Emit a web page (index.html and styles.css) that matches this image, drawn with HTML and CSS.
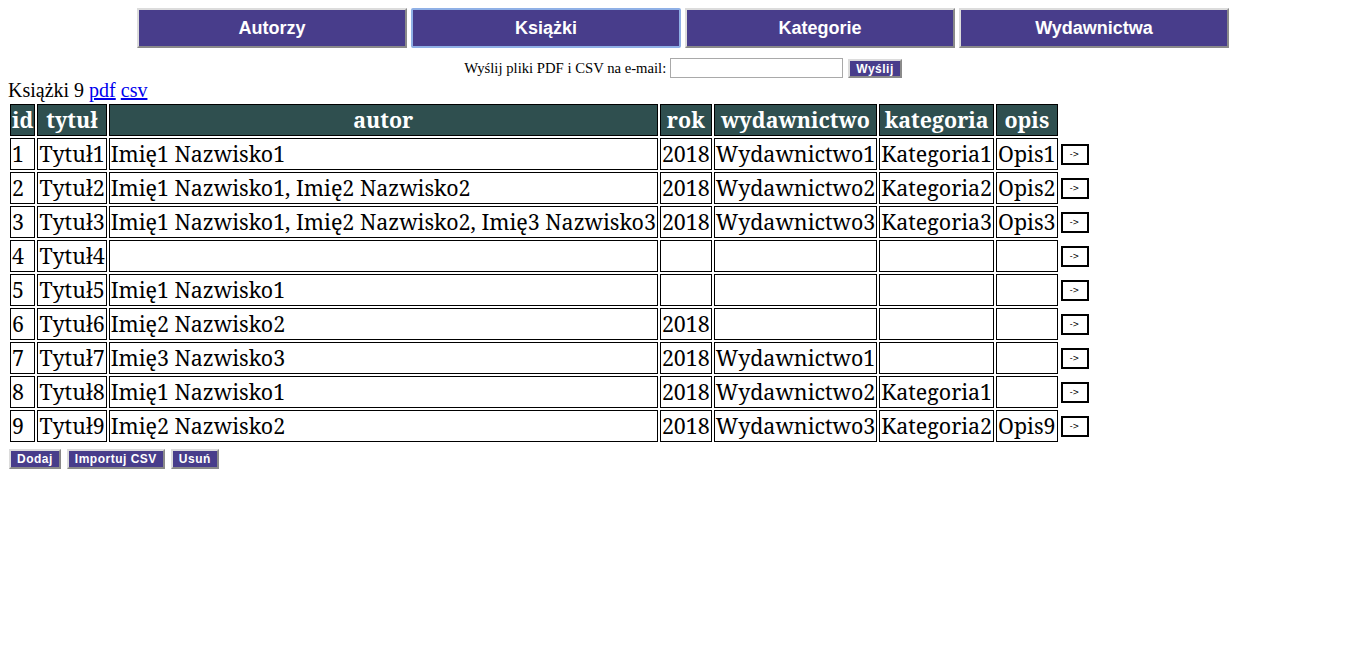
FILE: index.html
```html
<!DOCTYPE html>
<html lang="pl">
<head>
<meta charset="utf-8">
<title>Książki</title>
<link rel="stylesheet" href="styles.css">
</head>
<body>
<nav class="nav">
  <button class="nav-btn">Autorzy</button>
  <button class="nav-btn active">Książki</button>
  <button class="nav-btn">Kategorie</button>
  <button class="nav-btn">Wydawnictwa</button>
</nav>
<form class="mail">
  <span>Wyślij pliki PDF i CSV na e-mail:</span>
  <input class="mail-input" type="text">
  <button class="small-btn send" type="button">Wyślij</button>
</form>
<div class="title">Książki 9 <a href="#">pdf</a> <a href="#">csv</a></div>
<table class="books">
  <thead>
    <tr><th>id</th><th>tytuł</th><th>autor</th><th>rok</th><th>wydawnictwo</th><th>kategoria</th><th>opis</th></tr>
  </thead>
  <tbody>
    <tr><td>1</td><td>Tytuł1</td><td>Imię1 Nazwisko1</td><td>2018</td><td>Wydawnictwo1</td><td>Kategoria1</td><td>Opis1</td><td class="act"><button class="go">-&gt;</button></td></tr>
    <tr><td>2</td><td>Tytuł2</td><td>Imię1 Nazwisko1, Imię2 Nazwisko2</td><td>2018</td><td>Wydawnictwo2</td><td>Kategoria2</td><td>Opis2</td><td class="act"><button class="go">-&gt;</button></td></tr>
    <tr><td>3</td><td>Tytuł3</td><td>Imię1 Nazwisko1, Imię2 Nazwisko2, Imię3 Nazwisko3</td><td>2018</td><td>Wydawnictwo3</td><td>Kategoria3</td><td>Opis3</td><td class="act"><button class="go">-&gt;</button></td></tr>
    <tr><td>4</td><td>Tytuł4</td><td></td><td></td><td></td><td></td><td></td><td class="act"><button class="go">-&gt;</button></td></tr>
    <tr><td>5</td><td>Tytuł5</td><td>Imię1 Nazwisko1</td><td></td><td></td><td></td><td></td><td class="act"><button class="go">-&gt;</button></td></tr>
    <tr><td>6</td><td>Tytuł6</td><td>Imię2 Nazwisko2</td><td>2018</td><td></td><td></td><td></td><td class="act"><button class="go">-&gt;</button></td></tr>
    <tr><td>7</td><td>Tytuł7</td><td>Imię3 Nazwisko3</td><td>2018</td><td>Wydawnictwo1</td><td></td><td></td><td class="act"><button class="go">-&gt;</button></td></tr>
    <tr><td>8</td><td>Tytuł8</td><td>Imię1 Nazwisko1</td><td>2018</td><td>Wydawnictwo2</td><td>Kategoria1</td><td></td><td class="act"><button class="go">-&gt;</button></td></tr>
    <tr><td>9</td><td>Tytuł9</td><td>Imię2 Nazwisko2</td><td>2018</td><td>Wydawnictwo3</td><td>Kategoria2</td><td>Opis9</td><td class="act"><button class="go">-&gt;</button></td></tr>
  </tbody>
</table>
<div class="actions">
  <button class="small-btn">Dodaj</button>
  <button class="small-btn">Importuj CSV</button>
  <button class="small-btn">Usuń</button>
</div>
</body>
</html>
```

FILE: styles.css
```css
body {
  margin: 8px;
  font-family: "Liberation Serif", "Times New Roman", serif;
  font-size: 16px;
  color: #000;
}

.nav {
  display: flex;
  justify-content: center;
  gap: 4px;
}

.nav-btn {
  width: 270px;
  height: 40px;
  background: #483d8b;
  color: #fff;
  font-family: "Liberation Sans", Arial, sans-serif;
  font-weight: bold;
  font-size: 18px;
  border: 2px solid;
  border-color: #dcdcdc #8a8a8a #8a8a8a #dcdcdc;
  padding: 0;
}

.nav-btn.active {
  border-color: #8fb0e6;
  border-radius: 2px;
}

.mail {
  display: flex;
  justify-content: center;
  align-items: center;
  margin-top: 10px;
  font-size: 14.7px;
}

.mail-input {
  width: 169px;
  height: 16px;
  border: 1px solid #a9a9a9;
  padding: 1px;
  margin: 0 0 0 4px;
}

.small-btn {
  background: #483d8b;
  color: #fff;
  font-family: "Liberation Sans", Arial, sans-serif;
  font-weight: bold;
  font-size: 12px;
  border: 2px solid;
  border-color: #dcdcdc #8a8a8a #8a8a8a #dcdcdc;
  padding: 1px 6px;
  letter-spacing: 0.5px;
}

.small-btn.send {
  margin-left: 5px;
  height: 19px;
}

.title {
  font-size: 20px;
  line-height: 24px;
}

.title a {
  color: #0000ee;
}

.books {
  border-spacing: 2px;
  font-family: "Noto Serif", "DejaVu Serif", serif;
  font-size: 21.4px;
  line-height: 28px;
}

.books th {
  background: #2f4f4f;
  color: #fff;
  font-weight: bold;
  border: 1px solid #000;
  padding: 1px;
}

.books td {
  border: 1px solid #000;
  padding: 1px;
  white-space: nowrap;
}

.books td.act {
  border: none;
  vertical-align: middle;
}

.go {
  display: block;
  background: #fff;
  border: 2px solid #000;
  font-family: "DejaVu Sans", sans-serif;
  font-size: 8px;
  width: 28px;
  height: 21px;
  padding: 0;
}

.actions {
  display: flex;
  gap: 6px;
  margin-top: 5px;
  padding-left: 1px;
}
```
